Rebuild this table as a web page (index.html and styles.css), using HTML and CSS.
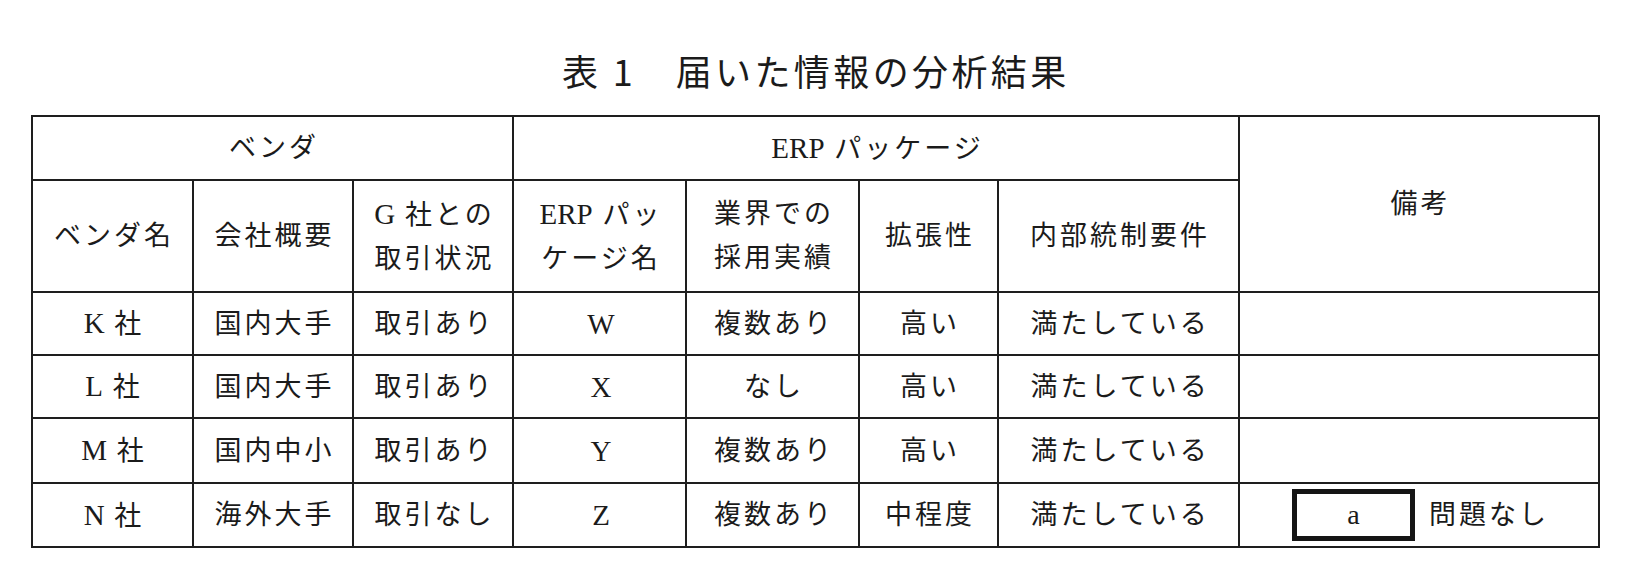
FILE: index.html
```html
<!DOCTYPE html>
<html lang="ja">
<head>
<meta charset="utf-8">
<title>表1 届いた情報の分析結果</title>
<link rel="stylesheet" href="styles.css">
</head>
<body>
<div class="page">
  <h1 class="title">表 1　届いた情報の分析結果</h1>
  <table class="grid">
    <colgroup>
      <col class="c1"><col class="c2"><col class="c3"><col class="c4">
      <col class="c5"><col class="c6"><col class="c7"><col class="c8">
    </colgroup>
    <tr class="r-h1">
      <td colspan="3">ベンダ</td>
      <td colspan="4"><span class="lat">ERP</span> パッケージ</td>
      <td rowspan="2">備考</td>
    </tr>
    <tr class="r-h2">
      <td>ベンダ名</td>
      <td>会社概要</td>
      <td class="two"><span class="lat">G</span> 社との<br>取引状況</td>
      <td class="two"><span class="lat">ERP</span> パッ<br>ケージ名</td>
      <td class="two">業界での<br>採用実績</td>
      <td>拡張性</td>
      <td>内部統制要件</td>
    </tr>
    <tr class="r-a">
      <td><span class="lat">K</span> 社</td><td>国内大手</td><td>取引あり</td><td class="lat">W</td><td>複数あり</td><td>高い</td><td>満たしている</td><td></td>
    </tr>
    <tr class="r-b">
      <td><span class="lat">L</span> 社</td><td>国内大手</td><td>取引あり</td><td class="lat">X</td><td>なし</td><td>高い</td><td>満たしている</td><td></td>
    </tr>
    <tr class="r-c">
      <td><span class="lat">M</span> 社</td><td>国内中小</td><td>取引あり</td><td class="lat">Y</td><td>複数あり</td><td>高い</td><td>満たしている</td><td></td>
    </tr>
    <tr class="r-d">
      <td><span class="lat">N</span> 社</td><td>海外大手</td><td>取引なし</td><td class="lat">Z</td><td>複数あり</td><td>中程度</td><td>満たしている</td>
      <td><span class="blank"><span class="lat">a</span></span><span class="note">問題なし</span></td>
    </tr>
  </table>
</div>
</body>
</html>
```

FILE: styles.css
```css
html, body {
  margin: 0;
  padding: 0;
  background: #ffffff;
}

.page {
  padding-top: 52px;
  color: #1b1b1b;
}

.title {
  margin: 0 0 27px 0;
  padding-left: 562px;
  height: 36px;
  font-family: "Noto Sans CJK JP", sans-serif;
  font-weight: 400;
  font-size: 36px;
  line-height: 36px;
  letter-spacing: 3.4px;
  white-space: nowrap;
}

.grid {
  margin-left: 31px;
  width: 1569px;
  table-layout: fixed;
  border-collapse: collapse;
  font-family: "Liberation Serif", "Noto Sans CJK JP", serif;
  font-size: 27px;
  letter-spacing: 3px;
}

.c1 { width: 161px; }
.c2 { width: 160px; }
.c3 { width: 160px; }
.c4 { width: 173px; }
.c5 { width: 173px; }
.c6 { width: 139px; }
.c7 { width: 241px; }
.c8 { width: 360px; }

.grid td {
  border: 2px solid #1e1e1e;
  padding: 0 0 0 3px;
  text-align: center;
  vertical-align: middle;
  white-space: nowrap;
  line-height: 30px;
}

.r-h1 { height: 64px; }
.r-h2 { height: 112px; }
.r-a { height: 63px; }
.r-b { height: 63px; }
.r-c { height: 65px; }
.r-d { height: 64px; }

.grid td.two {
  line-height: 44px;
}

.lat {
  font-family: "Liberation Serif", serif;
  font-size: 29px;
  letter-spacing: 0;
}

.blank {
  display: inline-flex;
  align-items: center;
  justify-content: center;
  box-sizing: border-box;
  width: 123px;
  height: 52px;
  border: 5px solid #151515;
  margin-right: 14px;
  vertical-align: middle;
}

.blank .lat {
  font-size: 28px;
}

.note {
  vertical-align: middle;
}
```
